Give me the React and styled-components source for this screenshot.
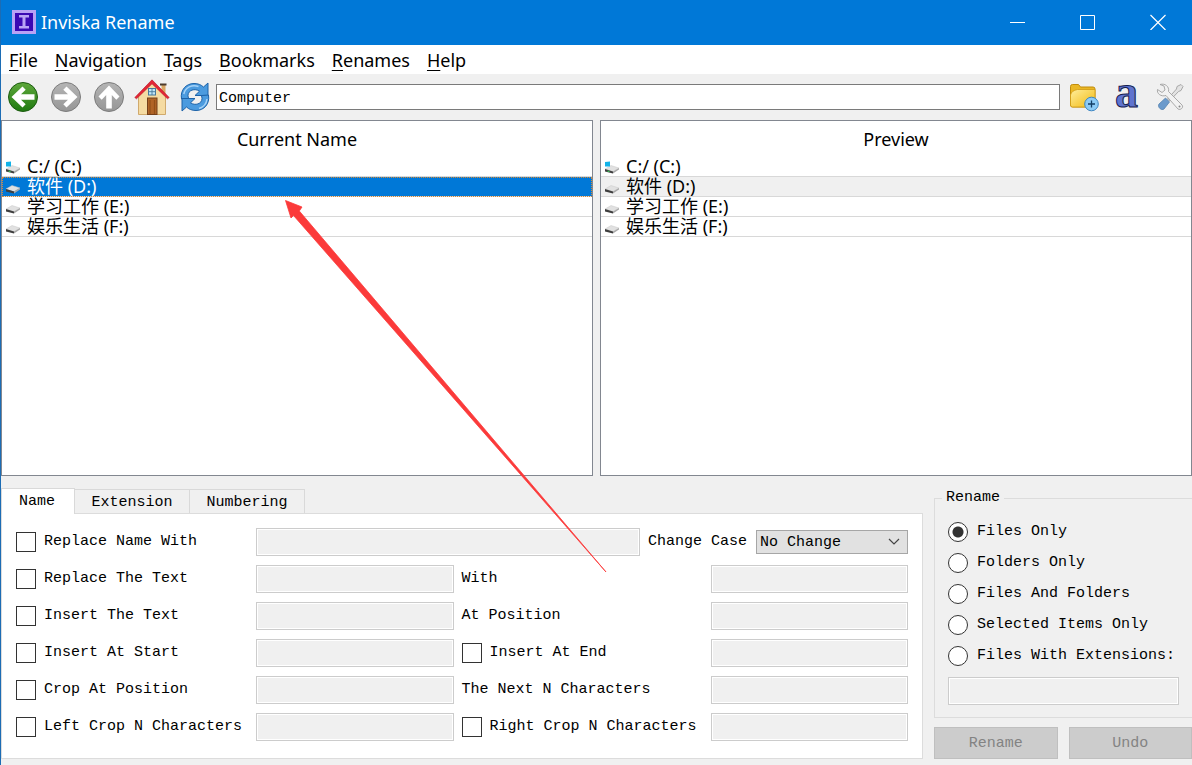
import React, { useState } from "react";
import styled, { createGlobalStyle } from "styled-components";

const menus = ["File", "Navigation", "Tags", "Bookmarks", "Renames", "Help"];

const drives = [
  { name: "C:/ (C:)", system: true },
  { name: "软件 (D:)" },
  { name: "学习工作 (E:)" },
  { name: "娱乐生活 (F:)" },
];

const tabs = ["Name", "Extension", "Numbering"];

const renameModes = ["Files Only", "Folders Only", "Files And Folders", "Selected Items Only", "Files With Extensions:"];

const nameRows = [
  { left: "Replace The Text", right: "With" },
  { left: "Insert The Text", right: "At Position" },
  { left: "Insert At Start", right: "Insert At End", rightCheck: true },
  { left: "Crop At Position", right: "The Next N Characters" },
  { left: "Left Crop N Characters", right: "Right Crop N Characters", rightCheck: true },
];

const AppIcon = () => (
  <svg width="24" height="24" viewBox="0 0 24 24">
    <rect width="24" height="24" fill="#b9a2f5" />
    <rect x="3" y="3" width="18" height="18" fill="#3a08b4" />
    <path d="M7 5h10v2.500h-3.500v8.500H17v2.500H7V16h3.500V7.500H7z" fill="#b9a2f5" />
  </svg>
);

const RoundArrow = ({ id, light, dark, edge, turn = 0 }) => (
  <svg width="32" height="32" viewBox="0 0 32 32">
    <defs>
      <linearGradient id={id} x1="0" y1="0" x2="0" y2="1">
        <stop offset="0" stopColor={light} />
        <stop offset="1" stopColor={dark} />
      </linearGradient>
    </defs>
    <circle cx="16" cy="16" r="14.500" fill={`url(#${id})`} stroke={edge} strokeWidth="1" />
    <path
      d="M4.500 16L15.500 5.500l3.200 3.200-4.700 4.500H27.500v5.600H14l4.700 4.500-3.200 3.200z"
      fill="#fff"
      transform={`rotate(${turn} 16 16)`}
    />
  </svg>
);

const HomeIcon = () => (
  <svg width="36" height="36" viewBox="0 0 36 36">
    <path d="M27.500 5h4v10l-4-4z" fill="#d9a765" />
    <path d="M26 4.500h6.500v2H26z" fill="#4c3b2d" />
    <path d="M4.500 17L18 3l13.500 14v18.500h-27z" fill="#f5dba2" stroke="#c69a55" strokeWidth=".8" />
    <path d="M.8 18.500L18 .8l17.200 17.700-1.700 1.300L18 4.800 2.500 19.800z" fill="#e32636" stroke="#b51221" strokeWidth=".6" />
    <rect x="13.500" y="19" width="9.500" height="16.500" fill="#b06426" stroke="#75401a" />
    <path d="M16 21v14M20.500 21v14" stroke="#935019" strokeWidth="1.200" />
    <rect x="14.500" y="9.500" width="7" height="6.500" fill="#bfe6f7" stroke="#47799b" />
    <path d="M18 9.500V16M14.500 12.700h7" stroke="#47799b" strokeWidth=".9" />
  </svg>
);

const RefreshIcon = () => (
  <svg width="30" height="30" viewBox="0 0 30 30">
    <g fill="#4b9bdf" stroke="#1c62a8" strokeWidth="1" strokeLinejoin="round">
      <path d="M1.500 17C0 8 6 1.500 14 1.500c4 0 7 1.200 9.500 3.500L28 1v12.500H15l4.500-4.300C15 6 8 8 8 13.500c0 1 .2 2 .7 3z" />
      <path d="M28.500 13C30 22 24 28.500 16 28.500c-4 0-7-1.200-9.500-3.500L2 29V16.500h13l-4.500 4.300C15 24 22 22 22 16.500c0-1-.2-2-.7-3z" />
    </g>
    <path d="M3.800 12C5 5.500 12 2 18.500 4.500M27 17c-.5 4-3 8-8 9.500" fill="none" stroke="#a5d2f7" strokeWidth="1.500" />
  </svg>
);

const FolderAddIcon = () => (
  <svg width="30" height="30" viewBox="0 0 30 30">
    <defs>
      <linearGradient id="folder" x1="0" y1="0" x2="1" y2="1">
        <stop offset="0" stopColor="#ffee9c" />
        <stop offset="1" stopColor="#f2b90e" />
      </linearGradient>
    </defs>
    <path d="M1.500 4.500q0-2 2-2h6l2 2.500h12.500q2 0 2 2V23q0 2-2 2H3.500q-2 0-2-2z" fill="#eab725" stroke="#c18c0b" />
    <path d="M1.500 13q1-4.500 7-5.500H26V23q0 2-2 2H3.500q-2 0-2-2z" fill="url(#folder)" stroke="#d09b13" strokeWidth=".8" />
    <circle cx="22.500" cy="22" r="6.800" fill="#8ccbf6" stroke="#3d86c2" />
    <path d="M22.500 18.500v7M19 22h7" stroke="#123e66" strokeWidth="1.300" />
  </svg>
);

const ToolsIcon = () => (
  <svg width="28" height="28" viewBox="0 0 28 28">
    <path d="M25 1.500l2 2-2 4-2.500 1-9 9.500-2-2L20.500 6l.5-2.500z" fill="#e3e3e3" stroke="#a0a0a0" strokeWidth=".9" />
    <path d="M9.500 15l4 4L8 26c-2.500 2-7-2-5-5z" fill="#6b9acc" stroke="#5583b0" strokeWidth=".8" />
    <path
      d="M1.500 6.500L6 9.500l3-2.500-1-4-4-1.500c5-1.500 9.500 2 8.500 7L26 22c2 2.500-1.500 5.500-4 4L10 12.500C5 14 .5 10.500 1.500 6.500z"
      fill="#f2f2f2"
      stroke="#a0a0a0"
      strokeWidth=".9"
    />
    <circle cx="23.500" cy="23.500" r="1" fill="#888" />
  </svg>
);

const DriveIcon = ({ system }) => (
  <svg width="16" height="14" viewBox="0 0 16 14">
    <path d="M1 9l6-3.500 8 2.500-6 3.500z" fill="#e1e1e1" stroke="#c9c9c9" strokeWidth=".5" />
    <path d="M1 9l8 2.500v2L1 11.500z" fill="#3e3e3e" />
    <path d="M9 11.500L15 8v1.500l-6 4z" fill="#a9a9a9" />
    {system && <path d="M1 2L6 1.500v5H1z" fill="#12b2e8" />}
    {system && <path d="M3.500 11l2 .6" stroke="#35c758" strokeWidth="1.200" />}
  </svg>
);

const FileList = ({ title, selected, current, onSelect }) => (
  <ListFrame>
    <ListTitle>{title}</ListTitle>
    {drives.map((drive, index) => (
      <DriveRow
        key={drive.name}
        type="button"
        $selected={selected === index}
        $current={current === index}
        onClick={() => onSelect(index)}
      >
        <DriveIcon system={drive.system} />
        {drive.name}
      </DriveRow>
    ))}
  </ListFrame>
);

const App = () => {
  const [drive, setDrive] = useState(1);
  const [path, setPath] = useState("Computer");
  const [tab, setTab] = useState("Name");
  const [mode, setMode] = useState("Files Only");

  return (
    <Window>
      <GlobalStyle />
      <TitleBar>
        <AppIcon />
        <Title>Inviska Rename</Title>
        <WindowButton type="button" aria-label="Minimize">
          <svg width="16" height="16" stroke="#fff"><path d="M0 8.500h15" /></svg>
        </WindowButton>
        <WindowButton type="button" aria-label="Maximize">
          <svg width="16" height="16" stroke="#fff" fill="none"><path d="M.5 1.500h14v14H.5z" /></svg>
        </WindowButton>
        <WindowButton type="button" aria-label="Close">
          <svg width="16" height="16" stroke="#fff" strokeWidth="1.200"><path d="M.5 1l15 15M15.500 1l-15 15" /></svg>
        </WindowButton>
      </TitleBar>
      <MenuBar>
        {menus.map((menu) => (
          <MenuButton key={menu} type="button">
            <u>{menu[0]}</u>
            {menu.slice(1)}
          </MenuButton>
        ))}
      </MenuBar>
      <ToolBar>
        <ToolButton type="button" aria-label="Back">
          <RoundArrow id="back" light="#5fa83c" dark="#1f7a10" edge="#1c5c10" />
        </ToolButton>
        <ToolButton type="button" aria-label="Forward">
          <RoundArrow id="forward" light="#b5b5b5" dark="#969696" edge="#7c7c7c" turn={180} />
        </ToolButton>
        <ToolButton type="button" aria-label="Up">
          <RoundArrow id="up" light="#b5b5b5" dark="#969696" edge="#7c7c7c" turn={90} />
        </ToolButton>
        <ToolButton type="button" aria-label="Home">
          <HomeIcon />
        </ToolButton>
        <ToolButton type="button" aria-label="Refresh">
          <RefreshIcon />
        </ToolButton>
        <PathInput aria-label="Path" value={path} onChange={(e) => setPath(e.target.value)} />
        <ToolButton type="button" aria-label="New folder">
          <FolderAddIcon />
        </ToolButton>
        <ToolButton type="button" aria-label="Rename font">
          <LetterIcon>a</LetterIcon>
        </ToolButton>
        <ToolButton type="button" aria-label="Settings">
          <ToolsIcon />
        </ToolButton>
      </ToolBar>
      <Lists>
        <FileList title="Current Name" selected={drive} onSelect={setDrive} />
        <FileList title="Preview" current={drive} onSelect={setDrive} />
      </Lists>
      <Bottom>
        <TabArea>
          <TabBar role="tablist">
            {tabs.map((name) => (
              <Tab key={name} type="button" role="tab" aria-selected={tab === name} $active={tab === name} onClick={() => setTab(name)}>
                {name}
              </Tab>
            ))}
          </TabBar>
          <TabPanel role="tabpanel">
            <CheckLabel>
              <CheckBox type="checkbox" />
              Replace Name With
            </CheckLabel>
            <WideCell>
              <TextInput aria-label="New name" disabled />
              <CaseLabel>
                Change Case
                <SelectBox>
                  <CaseSelect defaultValue="No Change">
                    <option>No Change</option>
                  </CaseSelect>
                  <svg width="14" height="8" fill="none" stroke="#444" strokeWidth="1.200"><path d="M2 1l5 5 5-5" /></svg>
                </SelectBox>
              </CaseLabel>
            </WideCell>
            {nameRows.map((row) => (
              <React.Fragment key={row.left}>
                <CheckLabel>
                  <CheckBox type="checkbox" />
                  {row.left}
                </CheckLabel>
                <TextInput aria-label={row.left} disabled />
                {row.rightCheck ? (
                  <CheckLabel>
                    <CheckBox type="checkbox" />
                    {row.right}
                  </CheckLabel>
                ) : (
                  <label htmlFor={row.right}>{row.right}</label>
                )}
                <TextInput id={row.right} aria-label={row.right} disabled />
              </React.Fragment>
            ))}
          </TabPanel>
        </TabArea>
        <SideArea>
          <RenameGroup>
            <legend>Rename</legend>
            {renameModes.map((name) => (
              <RadioLabel key={name}>
                <Radio type="radio" name="mode" checked={mode === name} onChange={() => setMode(name)} />
                {name}
              </RadioLabel>
            ))}
            <TextInput aria-label="Extensions" disabled />
          </RenameGroup>
          <Actions>
            <ActionButton type="button" disabled>Rename</ActionButton>
            <ActionButton type="button" disabled>Undo</ActionButton>
          </Actions>
        </SideArea>
      </Bottom>
      <Pointer width="322" height="374" viewBox="0 0 322 374">
        <path
          d="M.5 .5L17 7l-2.700 4L321 372 8.500 15.500 6 18z"
          fill="#fb3a3a"
          stroke="#fb3a3a"
          strokeWidth=".8"
          strokeLinejoin="round"
        />
      </Pointer>
    </Window>
  );
};

const GlobalStyle = createGlobalStyle`
  * {
    box-sizing: border-box;
  }

  body {
    margin: 0;
    color: #000;
    background: #f0f0f0;
    font-family: "Liberation Mono", "Noto Sans CJK SC", monospace;
    font-size: 15px;
    line-height: 20px;
  }

  button, input, select {
    margin: 0;
    color: inherit;
    font: inherit;
  }

  svg {
    display: block;
    flex: none;
  }
`;

const Window = styled.div`
  position: relative;
  display: flex;
  flex-direction: column;
  min-height: 100vh;
  overflow: hidden;
  border-left: 1px solid #1c6cb4;
`;

const TitleBar = styled.header`
  display: flex;
  align-items: center;
  height: 45px;
  padding: 0 0 1px 11px;
  color: #fff;
  background: #0078d7;
`;

const Title = styled.div`
  flex: 1;
  margin-left: 5px;
  font-family: "Noto Sans", sans-serif;
  font-size: 18px;
`;

const WindowButton = styled.button`
  display: flex;
  align-items: center;
  justify-content: center;
  width: 70px;
  height: 44px;
  padding: 0 0 0 2px;
  border: 0;
  background: none;
`;

const MenuBar = styled.nav`
  display: flex;
  gap: 17px;
  height: 29px;
  padding: 0 8px;
  background: #fff;
`;

const MenuButton = styled.button`
  padding: 0;
  border: 0;
  background: none;
  font-family: "Noto Sans", sans-serif;
  font-size: 18px;

  u {
    text-underline-offset: 3px;
    text-decoration-thickness: 1px;
  }
`;

const ToolBar = styled.div`
  display: flex;
  align-items: center;
  height: 46px;
  padding-right: 1px;
`;

const ToolButton = styled.button`
  display: flex;
  align-items: center;
  justify-content: center;
  width: 43px;
  height: 44px;
  padding: 0;
  border: 0;
  background: none;
`;

const LetterIcon = styled.span`
  padding-bottom: 10px;
  color: #5f74cf;
  font: bold 46px/28px "Liberation Serif", serif;
  -webkit-text-stroke: 1px #14204f;
`;

const PathInput = styled.input`
  flex: 1;
  min-width: 0;
  height: 26px;
  margin-right: 2px;
  padding: 2px 2px 0;
  border: 1px solid #7a7a7a;
  background: #fff;
`;

const Lists = styled.main`
  display: flex;
  flex: 1;
  gap: 7px;
`;

const ListFrame = styled.section`
  display: flex;
  flex: 1;
  flex-direction: column;
  min-height: 240px;
  border: 1px solid #828790;
  background: #fff;
  font-family: "Noto Sans", "Noto Sans CJK SC", sans-serif;
  font-size: 18px;
`;

const ListTitle = styled.h2`
  margin: 0;
  padding: 5px 0;
  font-size: 18px;
  font-weight: 400;
  line-height: 26px;
  text-align: center;
`;

const DriveRow = styled.button`
  display: flex;
  align-items: center;
  gap: 6px;
  height: 20px;
  padding: 0 3px;
  border: 0;
  border-bottom: 1px solid #d8d8d8;
  color: ${(props) => (props.$selected ? "#fff" : "#000")};
  background: ${(props) => (props.$selected ? "#0078d7" : props.$current ? "#f0f0f0" : "#fff")};
  outline: ${(props) => (props.$selected ? "1px dotted #d08a3c" : "none")};
  outline-offset: -1px;
  line-height: 19px;
  text-align: left;
`;

const Bottom = styled.section`
  display: flex;
  gap: 11px;
  padding: 12px 0 6px;
`;

const TabArea = styled.div`
  flex: 1;
`;

const TabBar = styled.div`
  display: flex;
  align-items: flex-end;
  height: 25px;
`;

const Tab = styled.button`
  min-width: ${(props) => (props.$active ? 74 : 115)}px;
  height: ${(props) => (props.$active ? 26 : 24)}px;
  margin-bottom: ${(props) => (props.$active ? -1 : 0)}px;
  padding: ${(props) => (props.$active ? "1px 17px 0 15px" : "2px 16px 0")};
  border: 1px solid #d9d9d9;
  border-left-width: ${(props) => (props.$active ? 1 : 0)}px;
  border-bottom: 0;
  background: ${(props) => (props.$active ? "#fff" : "#f0f0f0")};
`;

const TabPanel = styled.div`
  display: grid;
  grid-template-columns: 232px 1fr 241px 1fr;
  gap: 9px 8px;
  align-items: center;
  padding: 14px 14px 17px;
  border: 1px solid #dcdcdc;
  background: #fff;
`;

const WideCell = styled.div`
  display: flex;
  grid-column: 2 / -1;
  gap: 8px;
`;

const CheckLabel = styled.label`
  display: flex;
  align-items: center;
  gap: 8px;
  line-height: 22px;
`;

const CheckBox = styled.input`
  appearance: none;
  width: 20px;
  height: 20px;
  border: 1px solid #333;
  background: #fff;

  &:checked {
    box-shadow: inset 0 0 0 4px #fff;
    background: #333;
  }
`;

const TextInput = styled.input`
  width: 100%;
  min-width: 0;
  height: 28px;
  border: 1px solid #ccc;
  background: #f0f0f0;
  box-shadow: inset 0 0 0 1px #fff;
`;

const CaseLabel = styled.label`
  display: flex;
  flex: none;
  align-items: center;
  gap: 9px;
`;

const SelectBox = styled.span`
  display: grid;
  align-items: center;

  select,
  svg {
    grid-area: 1 / 1;
  }

  svg {
    justify-self: end;
    margin-right: 7px;
    pointer-events: none;
  }
`;

const CaseSelect = styled.select`
  appearance: none;
  width: 152px;
  height: 24px;
  padding: 2px 3px 0;
  border: 1px solid #a6a6a6;
  border-radius: 0;
  background: #e1e1e1;
`;

const SideArea = styled.aside`
  display: flex;
  flex-direction: column;
  justify-content: space-between;
  width: 258px;
`;

const RenameGroup = styled.fieldset`
  display: flex;
  flex-direction: column;
  gap: 11px;
  min-width: 0;
  margin: 0;
  padding: 14px 13px 12px;
  border: 1px solid #dcdcdc;
  border-right: 0;

  legend {
    margin-left: -6px;
    padding: 0 4px;
  }
`;

const RadioLabel = styled.label`
  display: flex;
  align-items: center;
  gap: 9px;
`;

const Radio = styled.input`
  appearance: none;
  width: 20px;
  height: 20px;
  border: 1px solid #333;
  border-radius: 50%;
  background: #fff;

  &:checked {
    background: radial-gradient(circle, #333 5px, #fff 6px);
  }
`;

const Actions = styled.div`
  display: grid;
  grid-template-columns: 1fr 1fr;
  gap: 11px;
`;

const ActionButton = styled.button`
  height: 32px;
  padding: 2px 0 0;
  border: 1px solid #bfbfbf;
  color: #838383;
  background: #ccc;
`;

const Pointer = styled.svg`
  position: absolute;
  top: 200px;
  left: 284px;
  pointer-events: none;
`;

export default App;
